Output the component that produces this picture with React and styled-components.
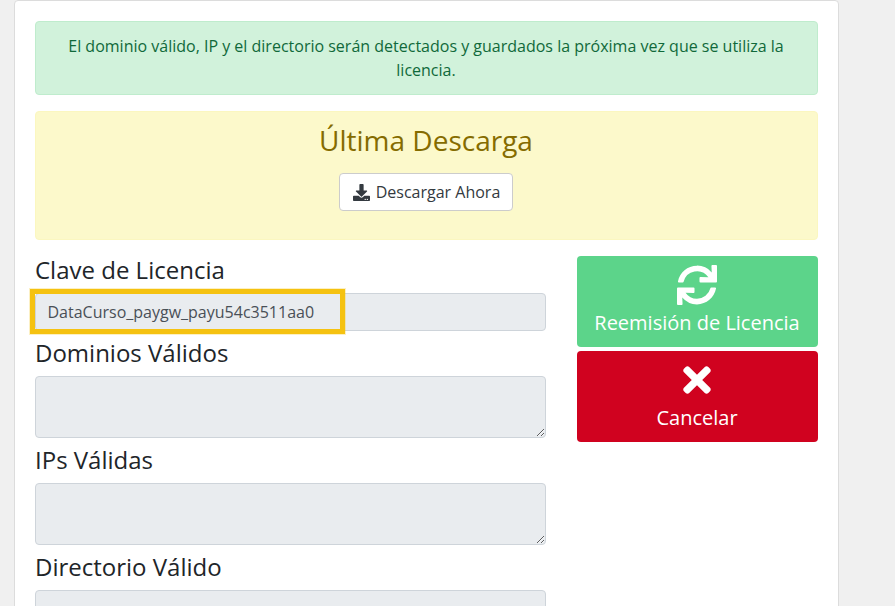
import React from "react";
import styled, { createGlobalStyle } from "styled-components";
import { FaDownload, FaSync, FaTimes } from "react-icons/fa";

const GlobalStyle = createGlobalStyle`
  html, body {
    margin: 0;
    height: 606px;
    overflow: hidden;
    background: #f0f0f0;
    font-family: "Open Sans", sans-serif;
    color: #212529;
  }
`;

const Card = styled.main`
  box-sizing: border-box;
  width: 825px;
  margin-left: 14px;
  padding: 20px;
  background: #fff;
  border: 1px solid #dcdcdc;
  border-radius: 4px;
`;

const Notice = styled.div`
  box-sizing: border-box;
  height: 74px;
  padding: 12px 21px 12px 20px;
  margin-bottom: 16px;
  background: #d1f2db;
  border: 1px solid #bfeccd;
  border-radius: 4px;
  color: #10693a;
  font-size: 16px;
  line-height: 24px;
  text-align: center;
`;

const DownloadPanel = styled.section`
  box-sizing: border-box;
  height: 129px;
  padding: 12px 21px 12px 20px;
  margin-bottom: 16px;
  background: #fcf9cb;
  border: 1px solid #fbf7c0;
  border-radius: 4px;
  text-align: center;
`;

const PanelTitle = styled.h3`
  margin: 0 0 17px;
  color: #856c00;
  font-size: 28px;
  font-weight: 400;
  line-height: 32px;
`;

const DownloadButton = styled.button`
  display: inline-flex;
  align-items: center;
  gap: 5.5px;
  box-sizing: border-box;
  height: 38px;
  padding: 0 11.5px 0 13px;
  background: #fff;
  border: 1px solid #ccc;
  border-radius: 4px;
  color: #343a40;
  font-family: inherit;
  font-size: 16px;
`;

const Columns = styled.div`
  display: grid;
  grid-template-columns: 511px 241px;
  column-gap: 31px;
  align-items: start;
`;

const Fields = styled.div`
  display: flex;
  flex-direction: column;
  gap: 8px;
`;

const Field = styled.div`
  display: flex;
  flex-direction: column;
`;

const FieldLabel = styled.label`
  margin-bottom: 9px;
  font-size: 24px;
  line-height: 28px;
`;

const InputWrap = styled.div`
  position: relative;
`;

const KeyInput = styled.input`
  display: block;
  box-sizing: border-box;
  width: 100%;
  height: 38px;
  padding: 6px 12px 6px 11.5px;
  background: #e9ecef;
  border: 1px solid #ced4da;
  border-radius: 4px;
  color: #495057;
  font-family: inherit;
  font-size: 16px;
`;

const Highlight = styled.div`
  position: absolute;
  left: -5px;
  top: -4px;
  box-sizing: border-box;
  width: 315px;
  height: 45px;
  border: 5px solid #f5c211;
  box-shadow: 0 0 0 1px rgba(245, 194, 17, 0.25);
`;

const AreaInput = styled.textarea`
  display: block;
  box-sizing: border-box;
  width: 100%;
  height: 62px;
  padding: 6px 12px;
  background: #e9ecef;
  border: 1px solid #ced4da;
  border-radius: 4px;
  font-family: inherit;
  font-size: 16px;
`;

const Actions = styled.div`
  display: flex;
  flex-direction: column;
  gap: 4px;
`;

const ActionButton = styled.button`
  display: flex;
  flex-direction: column;
  align-items: center;
  gap: 3px;
  box-sizing: border-box;
  height: 91px;
  padding: 9px 9px 0 8px;
  background: ${(p) => p.$bg};
  border: none;
  border-radius: 4px;
  color: #fff;
  font-family: inherit;
  font-size: 20px;
  line-height: 30px;
`;

export default function App() {
  return (
    <>
      <GlobalStyle />
      <Card>
        <Notice>
          El dominio válido, IP y el directorio serán detectados y guardados la próxima vez que se utiliza la licencia.
        </Notice>
        <DownloadPanel>
          <PanelTitle>Última Descarga</PanelTitle>
          <DownloadButton>
            <FaDownload size={17} />
            Descargar Ahora
          </DownloadButton>
        </DownloadPanel>
        <Columns>
          <Fields>
            <Field>
              <FieldLabel>Clave de Licencia</FieldLabel>
              <InputWrap>
                <KeyInput readOnly value="DataCurso_paygw_payu54c3511aa0" />
                <Highlight />
              </InputWrap>
            </Field>
            <Field>
              <FieldLabel>Dominios Válidos</FieldLabel>
              <AreaInput readOnly />
            </Field>
            <Field>
              <FieldLabel>IPs Válidas</FieldLabel>
              <AreaInput readOnly />
            </Field>
            <Field>
              <FieldLabel>Directorio Válido</FieldLabel>
              <AreaInput readOnly />
            </Field>
          </Fields>
          <Actions>
            <ActionButton $bg="#5cd48a">
              <FaSync size={40} />
              Reemisión de Licencia
            </ActionButton>
            <ActionButton $bg="#d0021f">
              <FaTimes size={40} />
              Cancelar
            </ActionButton>
          </Actions>
        </Columns>
      </Card>
    </>
  );
}
